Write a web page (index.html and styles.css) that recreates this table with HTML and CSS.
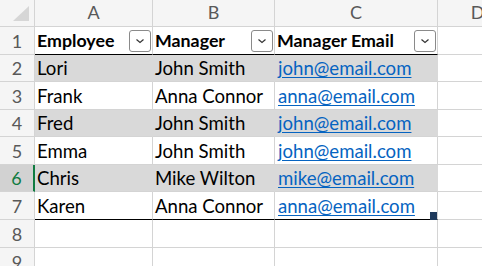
FILE: index.html
```html
<!DOCTYPE html>
<html>
<head>
<meta charset="utf-8">
<link rel="stylesheet" href="styles.css">
</head>
<body>
<div class="sheet">
  <div class="cell corner"><span class="tri"></span></div>
  <div class="cell colhdr">A</div>
  <div class="cell colhdr">B</div>
  <div class="cell colhdr">C</div>
  <div class="cell colhdr">D</div>

  <div class="cell rowhdr">1</div>
  <div class="cell th">Employee<span class="dd"><svg width="10" height="6" viewBox="0 0 10 6"><path d="M1.5 1.5 L5 4.5 L8.5 1.5" fill="none" stroke="#333" stroke-width="1.2"/></svg></span></div>
  <div class="cell th">Manager<span class="dd"><svg width="10" height="6" viewBox="0 0 10 6"><path d="M1.5 1.5 L5 4.5 L8.5 1.5" fill="none" stroke="#333" stroke-width="1.2"/></svg></span></div>
  <div class="cell th">Manager Email<span class="dd"><svg width="10" height="6" viewBox="0 0 10 6"><path d="M1.5 1.5 L5 4.5 L8.5 1.5" fill="none" stroke="#333" stroke-width="1.2"/></svg></span></div>
  <div class="cell"></div>

  <div class="cell rowhdr">2</div>
  <div class="cell band">Lori</div>
  <div class="cell band">John Smith</div>
  <div class="cell band link"><a>john@email.com</a></div>
  <div class="cell"></div>

  <div class="cell rowhdr">3</div>
  <div class="cell">Frank</div>
  <div class="cell">Anna Connor</div>
  <div class="cell link"><a>anna@email.com</a></div>
  <div class="cell"></div>

  <div class="cell rowhdr">4</div>
  <div class="cell band">Fred</div>
  <div class="cell band">John Smith</div>
  <div class="cell band link"><a>john@email.com</a></div>
  <div class="cell"></div>

  <div class="cell rowhdr">5</div>
  <div class="cell">Emma</div>
  <div class="cell">John Smith</div>
  <div class="cell link"><a>john@email.com</a></div>
  <div class="cell"></div>

  <div class="cell rowhdr active">6</div>
  <div class="cell band">Chris</div>
  <div class="cell band">Mike Wilton</div>
  <div class="cell band link"><a>mike@email.com</a></div>
  <div class="cell"></div>

  <div class="cell rowhdr">7</div>
  <div class="cell last">Karen</div>
  <div class="cell last">Anna Connor</div>
  <div class="cell last link"><a>anna@email.com</a><span class="handle"></span></div>
  <div class="cell"></div>

  <div class="cell rowhdr">8</div>
  <div class="cell"></div>
  <div class="cell"></div>
  <div class="cell"></div>
  <div class="cell"></div>

  <div class="cell rowhdr">9</div>
  <div class="cell"></div>
  <div class="cell"></div>
  <div class="cell"></div>
  <div class="cell"></div>
</div>
</body>
</html>
```

FILE: styles.css
```css
html, body {
  margin: 0;
  padding: 0;
  background: #ffffff;
  overflow: hidden;
}
.sheet {
  width: 482px;
  height: 266px;
  display: grid;
  grid-template-columns: 35px 118px 122px 163px 80px;
  grid-template-rows: 27px 28px 27px 28px 27px 28px 27px 28px 28px 28px;
  font-family: Lato, "Liberation Sans", sans-serif;
  font-size: 18.6px;
  color: #000;
  overflow: hidden;
}
.cell {
  box-sizing: border-box;
  border-right: 1px solid #d4d4d4;
  border-bottom: 1px solid #d4d4d4;
  position: relative;
  display: flex;
  align-items: flex-end;
  padding: 0 2px 3px 2px;
  line-height: 20px;
  white-space: nowrap;
  overflow: visible;
}
.corner {
  background: #f5f5f5;
  padding: 0;
}
.tri {
  position: absolute;
  right: 5px;
  bottom: 5px;
  width: 0;
  height: 0;
  border-left: 16px solid transparent;
  border-bottom: 15px solid #d6d6d6;
}
.colhdr {
  background: #f5f5f5;
  color: #595959;
  justify-content: center;
  padding-bottom: 4px;
  font-size: 18px;
}
.rowhdr {
  background: #f5f5f5;
  color: #595959;
  justify-content: center;
  padding-left: 0;
  padding-right: 0;
  font-size: 18px;
}
.rowhdr.active {
  background: #d2d2d2;
  color: #107c41;
  border-right: 2px solid #107c41;
}
.th {
  font-weight: 700;
  font-size: 17.8px;
  border-bottom: 1px solid #000;
  padding-bottom: 4px;
}
.dd {
  position: absolute;
  right: 1px;
  top: 3px;
  width: 22px;
  height: 22px;
  box-sizing: border-box;
  border: 1px solid #8a8a8a;
  border-radius: 3px;
  background: #fff;
  display: flex;
  align-items: center;
  justify-content: center;
}
.band {
  background: #d9d9d9;
  border-right-color: #d9d9d9;
}
.link {
  padding-left: 3px;
}
.link a {
  color: #0563c1;
  text-decoration: underline;
  text-underline-offset: 2px;
}
.last {
  border-bottom: 1px solid #000;
}
.handle {
  position: absolute;
  right: 0;
  bottom: -1px;
  width: 7px;
  height: 8px;
  background: #1e3a5c;
}
```
